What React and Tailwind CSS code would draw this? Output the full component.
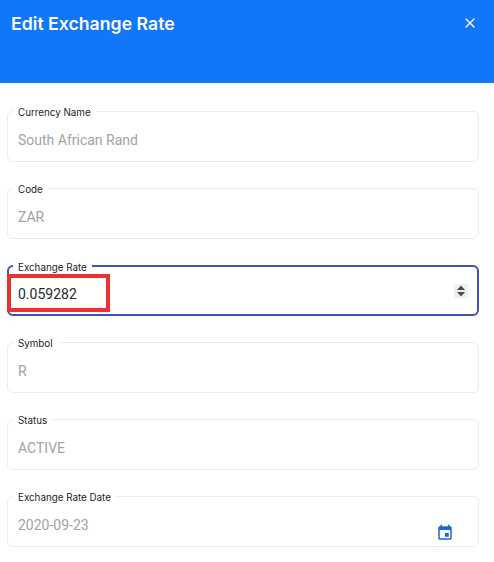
import { X } from 'lucide-react';

const fields = [
  { label: 'Currency Name', value: 'South African Rand' },
  { label: 'Code', value: 'ZAR' },
  { label: 'Exchange Rate', value: '0.059282', active: true },
  { label: 'Symbol', value: 'R' },
  { label: 'Status', value: 'ACTIVE' },
  { label: 'Exchange Rate Date', value: '2020-09-23', date: true },
];

function Spinner() {
  return (
    <div className="ml-auto mr-[9px] flex h-[14px] w-[14px] items-center justify-center bg-[#f0f0f0]">
      <svg width="10" height="12" viewBox="0 0 10 12" fill="#4a4a4a">
        <path d="M5 0.5 9 5H1z" />
        <path d="M1 7h8l-4 4.500z" />
      </svg>
    </div>
  );
}

function CalendarIcon() {
  return (
    <svg className="absolute right-[24px] top-[27px]" width="18" height="18" viewBox="0 0 24 24" fill="#1f66d6">
      <path d="M17 12h-5v5h5v-5zM16 1v2H8V1H6v2H5c-1.110 0-1.990.9-1.990 2L3 19c0 1.100.89 2 2 2h14c1.100 0 2-.9 2-2V5c0-1.100-.9-2-2-2h-1V1h-2zm3 18H5V8h14v11z" />
    </svg>
  );
}

function Field({ label, value, active, date }) {
  return (
    <div
      className={`relative flex h-[51px] items-center rounded-[6px] border ${
        active ? 'border-2 border-[#3f51b5] pl-[9px]' : 'border-[#ececec] pl-[10px]'
      }`}
    >
      <span
        className={`absolute -top-[5px] bg-white px-[5px] font-['Inter',sans-serif] text-[9.800px] leading-[11px] text-[#1c1c1c] ${
          active ? 'left-[4px]' : 'left-[5px]'
        }`}
      >
        {label}
      </span>
      <span
        className={`pt-[7px] font-['Roboto',sans-serif] text-[14px] ${
          active ? 'text-[#2a2a2a]' : 'text-[#a3a3a3]'
        }`}
      >
        {value}
      </span>
      {active && <Spinner />}
      {date && <CalendarIcon />}
    </div>
  );
}

export default function App() {
  return (
    <div className="h-[562px] w-[494px] overflow-hidden bg-white">
      <header className="flex h-[83px] items-start justify-between bg-[#1176f9] pl-[11px] pr-[16px] pt-[13px]">
        <h1 className="font-['Inter',sans-serif] text-[17.700px] font-semibold leading-[22px] text-white">
          Edit Exchange Rate
        </h1>
        <button className="mt-[2px] text-white">
          <X size={16} strokeWidth={1.800} />
        </button>
      </header>
      <div className="relative ml-[7px] mt-[28px] flex w-[472px] flex-col gap-[26px]">
        {fields.map((f) => (
          <Field key={f.label} {...f} />
        ))}
        <div className="absolute left-0 top-[163px] h-[38px] w-[103px] border-4 border-[#ee3030]" />
      </div>
    </div>
  );
}
